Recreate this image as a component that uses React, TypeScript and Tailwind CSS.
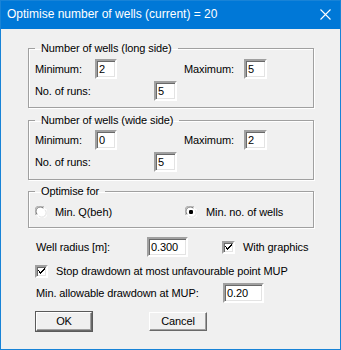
import React from "react";

const sunken =
  "border-2 border-t-[#a0a0a0] border-l-[#a0a0a0] border-b-white border-r-white shadow-[inset_1px_1px_0_#696969,inset_-1px_-1px_0_#e3e3e3] bg-white";

function Field({ value, w }: { value: string; w: string }) {
  return (
    <div className={`${sunken} ${w} h-[20px] flex items-center pl-[2px] pt-[1px] leading-none`}>
      {value}
    </div>
  );
}

function Check() {
  return (
    <div className={`${sunken} w-[13px] h-[13px] shrink-0 flex items-center justify-center`}>
      <svg width="7" height="7" viewBox="0 0 7 7" shapeRendering="crispEdges">
        <path d="M0 2h1v3h1v1h1v-1h1v-1h1v-1h1v-1h1v-2h-1v1h-1v1h-1v1h-1v1h-1v-1h-1v-1h-1z" fill="#000" />
        <path d="M0 2h1v1h1v1h1v1h-1v-1h-1v-1h-1z" fill="#000" />
      </svg>
    </div>
  );
}

function Radio({ on }: { on?: boolean }) {
  return (
    <svg width="12" height="12" viewBox="0 0 12 12" className="shrink-0">
      <circle cx="6" cy="6" r="5.5" fill="#fff" />
      <path d="M1.2 9 A5.3 5.3 0 0 1 9 1.2" stroke="#a0a0a0" strokeWidth="1" fill="none" />
      <path d="M2.2 8.3 A4.3 4.3 0 0 1 8.3 2.2" stroke="#696969" strokeWidth="1" fill="none" />
      <path d="M10.8 3 A5.3 5.3 0 0 1 3 10.8" stroke="#fff" strokeWidth="1" fill="none" />
      <path d="M9.8 3.7 A4.3 4.3 0 0 1 3.7 9.8" stroke="#e3e3e3" strokeWidth="1" fill="none" />
      {on && <rect x="4" y="4" width="4" height="4" rx="1.2" fill="#000" />}
    </svg>
  );
}

function Group({
  title,
  children,
  className,
}: {
  title: string;
  children: React.ReactNode;
  className?: string;
}) {
  return (
    <fieldset
      className={`w-[286px] border border-[#a0a0a0] shadow-[inset_1px_1px_0_#fff,1px_1px_0_#fff] ${className ?? ""}`}
    >
      <legend className="ml-[6px] px-[6px] leading-[13px]">{title}</legend>
      {children}
    </fieldset>
  );
}

function Button({ label, w, def }: { label: string; w: string; def?: boolean }) {
  return (
    <div
      className={`${w} h-[21px] flex items-center justify-center ${
        def ? "border border-[#5a5a5a]" : "border border-transparent"
      }`}
    >
      <div className="w-full h-full flex items-center justify-center bg-[#f0f0f0] border border-t-white border-l-white border-b-[#696969] border-r-[#696969] shadow-[inset_-1px_-1px_0_#a0a0a0]">
        {label}
      </div>
    </div>
  );
}

export default function App() {
  return (
    <div className="w-[341px] h-[350px] bg-[#f0f0f0] border border-[#1883d7] flex flex-col font-['Liberation_Sans',Arial,sans-serif] text-[11px] tracking-[-0.1px] text-black">
      <div className="h-[28px] bg-[#0078d7] text-white flex items-center justify-between pl-[6px] pr-[9px] pb-[3px] shrink-0 tracking-normal">
        <span className="text-[12px]">Optimise number of wells (current) = 20</span>
        <svg width="11" height="11" viewBox="0 0 11 11" className="mt-[1px]">
          <path d="M0.5 0.5L10.5 10.5M10.5 0.5L0.5 10.5" stroke="#fff" strokeWidth="1.1" />
        </svg>
      </div>

      <div className="flex flex-col pl-[27px]">
        <Group title="Number of wells (long side)" className="mt-[13px]">
          <div className="flex flex-col gap-[2px] pl-[6px] pt-[4px] pb-[6px]">
            <div className="flex items-center h-[20px]">
              <span className="w-[60px]">Minimum:</span>
              <Field value="2" w="w-[22px]" />
              <span className="w-[67px]" />
              <span className="w-[60px]">Maximum:</span>
              <Field value="5" w="w-[23px]" />
            </div>
            <div className="flex items-center h-[20px]">
              <span className="w-[119px]">No. of runs:</span>
              <Field value="5" w="w-[23px]" />
            </div>
          </div>
        </Group>

        <Group title="Number of wells (wide side)" className="mt-[6px]">
          <div className="flex flex-col gap-[2px] pl-[6px] pt-[3px] pb-[7px]">
            <div className="flex items-center h-[20px]">
              <span className="w-[60px]">Minimum:</span>
              <Field value="0" w="w-[22px]" />
              <span className="w-[67px]" />
              <span className="w-[60px]">Maximum:</span>
              <Field value="2" w="w-[23px]" />
            </div>
            <div className="flex items-center h-[20px]">
              <span className="w-[119px]">No. of runs:</span>
              <Field value="5" w="w-[23px]" />
            </div>
          </div>
        </Group>

        <Group title="Optimise for" className="mt-[5px]">
          <div className="flex items-center h-[16px] pl-[6px] mt-[6px] mb-[7px]">
            <div className="w-[150px] flex items-center gap-[8px]">
              <Radio />
              <span>Min. Q(beh)</span>
            </div>
            <div className="flex items-center gap-[9px]">
              <Radio on />
              <span>Min. no. of wells</span>
            </div>
          </div>
        </Group>
      </div>

      <div className="flex flex-col pl-[34px]">
        <div className="flex items-center h-[20px] mt-[9px]">
          <span className="w-[112px] pl-[1px]">Well radius [m]:</span>
          <Field value="0.300" w="w-[41px]" />
          <span className="w-[34px]" />
          <Check />
          <span className="ml-[8px]">With graphics</span>
        </div>
        <div className="flex items-center h-[14px] mt-[7px]">
          <Check />
          <span className="ml-[8px]">Stop drawdown at most unfavourable point MUP</span>
        </div>
        <div className="flex items-center h-[20px] mt-[5px]">
          <span className="w-[188px] pl-[1px]">Min. allowable drawdown at MUP:</span>
          <Field value="0.20" w="w-[41px]" />
        </div>
        <div className="flex items-center mt-[8px]">
          <Button label="OK" w="w-[58px]" def />
          <span className="w-[55px]" />
          <Button label="Cancel" w="w-[60px]" />
        </div>
      </div>
    </div>
  );
}
